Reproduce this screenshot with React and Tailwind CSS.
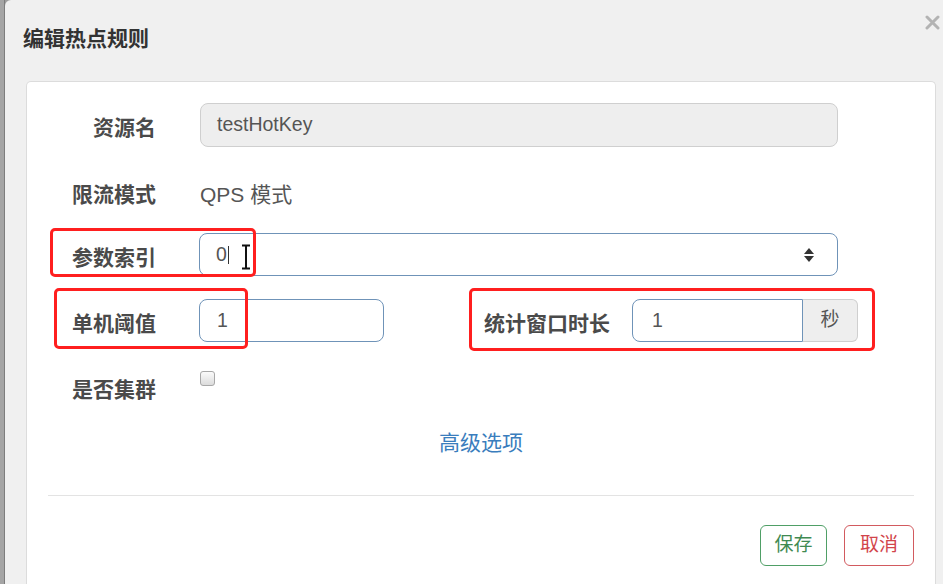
import React from "react";

const font = { fontFamily: '"Liberation Sans", "Noto Sans CJK SC", sans-serif' };

function Label({ children, w = "w-[129px]", className = "" }) {
  return (
    <div className={`${w} shrink-0 text-right text-[21px] leading-[24px] font-bold text-[#4a4a4a] ${className}`}>
      {children}
    </div>
  );
}

export default function App() {
  return (
    <div
      className="relative flex h-[584px] w-[943px] overflow-hidden bg-[#9d9d9d]"
      style={font}
    >
      {/* left backdrop strip */}
      <div className="w-[5px] shrink-0 border-r border-[#7d7d7d] bg-[#a5a5a5]" />

      {/* modal */}
      <div className="flex flex-1 flex-col rounded-tl-[6px] bg-[#f0f0f0]">
        <div className="relative h-[81px] shrink-0">
          <div className="pl-[18px] pt-[27px] text-[21px] leading-[24px] font-bold text-[#333]">
            编辑热点规则
          </div>
          <svg
            className="absolute right-[3px] top-[15px]"
            width="15"
            height="15"
            viewBox="0 0 15 15"
          >
            <path d="M2 2 L13 13 M13 2 L2 13" stroke="#b3b3b3" strokeWidth="3" strokeLinecap="round" />
          </svg>
        </div>

        <div className="ml-[21px] mr-[7px] flex-1 rounded-t-[5px] border border-b-0 border-[#dcdcdc] bg-white pt-[21px]">
          {/* row 1 */}
          <div className="flex h-[44px] items-start">
            <Label className="pt-[13px]">资源名</Label>
            <div className="ml-[44px] flex h-[44px] w-[638px] items-center rounded-[8px] border border-[#cfcfcf] bg-[#eeeeee] pl-[16px] text-[19.5px] text-[#555]">
              testHotKey
            </div>
          </div>

          {/* row 2 */}
          <div className="mt-[26px] flex h-[44px] items-center">
            <Label>限流模式</Label>
            <div className="ml-[44px] text-[21px] leading-[24px] text-[#555]">QPS 模式</div>
          </div>

          {/* row 3 */}
          <div className="mt-[16px] flex h-[43px] items-start">
            <Label className="pt-[13px]">参数索引</Label>
            <div className="ml-[43px] flex h-[43px] w-[639px] items-center justify-between rounded-[8px] border border-[#6f93b8] bg-white pl-[16px] pr-[22px] text-[19.5px] text-[#555]">
              <div className="flex items-center">
                <span>0</span>
                <span className="ml-[1px] h-[18px] w-[1px] bg-[#333]" />
              </div>
              <svg width="12" height="18" viewBox="0 0 12 18">
                <path d="M6 2 L11 8 L1 8 Z" fill="#333" />
                <path d="M6 16 L11 10 L1 10 Z" fill="#333" />
              </svg>
            </div>
          </div>

          {/* row 4 */}
          <div className="mt-[23px] flex h-[43px] items-start">
            <Label className="pt-[13px]">单机阈值</Label>
            <div className="ml-[43px] flex h-[43px] w-[185px] items-center rounded-[8px] border border-[#6f93b8] bg-white pl-[17px] text-[19.5px] text-[#555]">
              1
            </div>
            <Label w="w-[128px]" className="ml-[98px] pt-[13px]">统计窗口时长</Label>
            <div className="ml-[22px] flex h-[43px]">
              <div className="flex w-[171px] items-center rounded-l-[8px] border border-[#6f93b8] bg-white pl-[19px] text-[19.5px] text-[#555]">
                1
              </div>
              <div className="flex w-[55px] items-center justify-center rounded-r-[6px] border border-l-0 border-[#cfcfcf] bg-[#eeeeee] text-[19px] text-[#555]">
                秒
              </div>
            </div>
          </div>

          {/* row 5 */}
          <div className="mt-[23px] flex h-[44px] items-start">
            <Label className="pt-[13px]">是否集群</Label>
            <div className="ml-[44px] mt-[6px] h-[15px] w-[15px] rounded-[3px] border border-[#a8a8a8] bg-gradient-to-b from-[#fbfbfb] to-[#dcdcdc]" />
          </div>

          {/* advanced */}
          <div className="mt-[22px] text-center text-[21px] leading-[24px] text-[#3a7dbd]">高级选项</div>

          <div className="mx-[21px] mt-[40px] border-t border-[#e3e3e3]" />

          <div className="mt-[29px] flex justify-end gap-[17px] pr-[21px]">
            <div className="flex h-[41px] w-[67px] items-center justify-center rounded-[6px] border border-[#4f9f66] text-[19px] text-[#3f8a52]">
              保存
            </div>
            <div className="flex h-[41px] w-[70px] items-center justify-center rounded-[6px] border border-[#d25a5f] text-[19px] text-[#d2454b]">
              取消
            </div>
          </div>
        </div>
      </div>

      {/* red annotation boxes */}
      <div className="pointer-events-none absolute left-[50px] top-[228px] h-[49px] w-[206px] rounded-[5px] border-[3px] border-[#ff1f1f]" />
      <div className="pointer-events-none absolute left-[54px] top-[288px] h-[61px] w-[194px] rounded-[5px] border-[3px] border-[#ff1f1f]" />
      <div className="pointer-events-none absolute left-[469px] top-[288px] h-[63px] w-[406px] rounded-[5px] border-[3px] border-[#ff1f1f]" />

      {/* I-beam mouse cursor */}
      <svg className="pointer-events-none absolute left-[240px] top-[244px]" width="12" height="26" viewBox="0 0 12 26">
        <path d="M2 1.5 H10 M2 24.5 H10 M6 1.5 V24.5" stroke="#111" strokeWidth="2" fill="none" />
      </svg>
    </div>
  );
}
